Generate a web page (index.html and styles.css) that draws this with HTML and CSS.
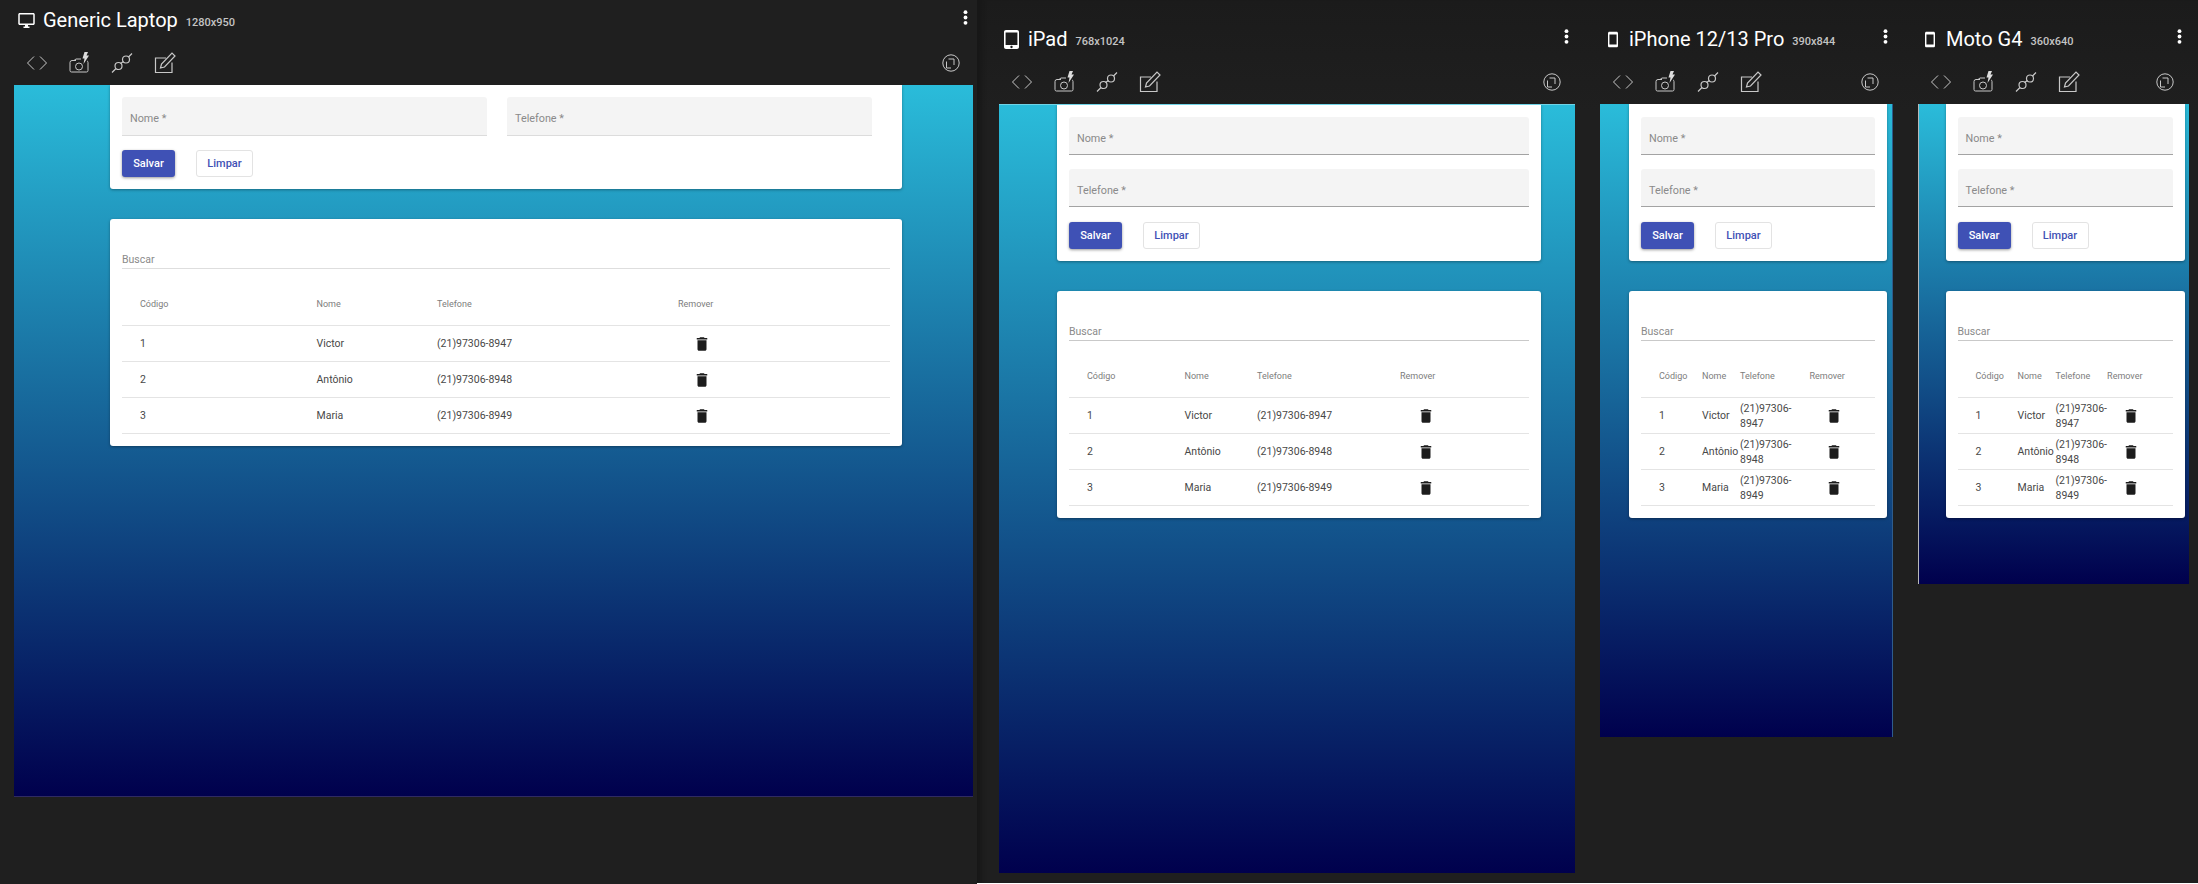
FILE: index.html
```html
<!DOCTYPE html>
<html lang="en">
<head>
    <meta charset="UTF-8">
    <meta name="viewport" content="width=device-width, initial-scale=1.0">
    <title>Responsive preview</title>
    <link rel="stylesheet" href="styles.css">
</head>
<body>
    <svg class="sprites" width="0" height="0">
        <symbol id="i-desktop" viewBox="1 2 22 20"><path fill="currentColor" d="M21 2H3c-1.1 0-2 .9-2 2v12c0 1.1.9 2 2 2h7v2H8v2h8v-2h-2v-2h7c1.100 0 2-.9 2-2V4c0-1.100-.9-2-2-2zm0 14H3V4h18v12z"/></symbol>
        <symbol id="i-tablet" viewBox="2 0 19 24"><path fill="currentColor" d="M18.500 0h-14C3.120 0 2 1.120 2 2.500v19C2 22.880 3.120 24 4.500 24h14c1.380 0 2.500-1.120 2.500-2.500v-19C21 1.120 19.880 0 18.500 0zm-7 23c-.83 0-1.500-.67-1.500-1.500s.67-1.500 1.500-1.500 1.500.67 1.500 1.500-.67 1.500-1.500 1.500zm7.500-4H4V3h15v16z"/></symbol>
        <symbol id="i-phone" viewBox="5 1 14 22"><path fill="currentColor" d="M17 1H7c-1.100 0-2 .9-2 2v18c0 1.100.9 2 2 2h10c1.100 0 2-.9 2-2V3c0-1.100-.9-2-2-2zm0 18H7V5h10v14z"/></symbol>
        <symbol id="i-dots" viewBox="0 0 4 14"><circle cx="2" cy="2" r="1.800" fill="currentColor"/><circle cx="2" cy="7" r="1.800" fill="currentColor"/><circle cx="2" cy="12" r="1.800" fill="currentColor"/></symbol>
        <symbol id="i-code" viewBox="0 0 22 22"><path fill="none" stroke="currentColor" d="M8 4.500L1.500 11 8 17.500M14 4.500l6.500 6.500-6.500 6.500"/></symbol>
        <symbol id="i-camera" viewBox="0 0 22 22"><path fill="none" stroke="currentColor" d="M7 8.500H3a2 2 0 0 0-2 2v8a1.500 1.500 0 0 0 1.500 1.500h15a1.500 1.500 0 0 0 1.500-1.500v-8a2 2 0 0 0-1-1.700M5 8.500l2-1.500h5"/><circle cx="10" cy="14.500" r="3.500" fill="none" stroke="currentColor"/><path fill="#ddd" d="M15.500 0h3.500l-1.500 3.500H20L14.500 12l1-5.500H13.500z"/></symbol>
        <symbol id="i-plug" viewBox="0 0 22 22"><circle cx="7.500" cy="14" r="3.500" fill="none" stroke="currentColor" stroke-width="1.200"/><circle cx="15" cy="7.500" r="3.500" fill="none" stroke="currentColor" stroke-width="1.200"/><path fill="none" stroke="currentColor" stroke-width="1.200" d="M1 20.500l4-4M9.500 11.500l3-2M17.500 5L21 1.500"/></symbol>
        <symbol id="i-edit" viewBox="0 0 22 22"><path fill="none" stroke="currentColor" stroke-width="1.200" d="M12 6H1.500v14.500H18V10.500"/><path fill="none" stroke="currentColor" stroke-width="1.200" d="M6.500 16l1-4L18 1l3 3-10.500 11z"/></symbol>
        <symbol id="i-rotate" viewBox="0 0 18 18"><circle cx="9" cy="9" r="8.200" fill="none" stroke="currentColor"/><path fill="none" stroke="currentColor" d="M6.500 5h5.500v6M4.500 7.500V14H9"/></symbol>
        <symbol id="i-trash" viewBox="0 0 24 24"><path fill="currentColor" d="M6 19c0 1.100.9 2 2 2h8c1.100 0 2-.9 2-2V7H6v12zM19 4h-3.500l-1-1h-5l-1 1H5v2h14V4z"/></symbol>
    </svg>

    <div class="devices">
        <section class="device laptop">
            <header class="device-head">
                <svg class="device-icon"><use href="#i-desktop"/></svg>
                <span class="device-name">Generic Laptop</span>
                <span class="device-size">1280x950</span>
                <svg class="dots"><use href="#i-dots"/></svg>
            </header>
            <div class="toolbar">
                <svg class="tool"><use href="#i-code"/></svg>
                <svg class="tool"><use href="#i-camera"/></svg>
                <svg class="tool"><use href="#i-plug"/></svg>
                <svg class="tool"><use href="#i-edit"/></svg>
                <svg class="rotate"><use href="#i-rotate"/></svg>
            </div>
            <div class="screen">
                <form class="card form-card">
                    <div class="fields">
                        <div class="field">Nome *</div>
                        <div class="field">Telefone *</div>
                    </div>
                    <div class="actions">
                        <button type="button" class="btn btn-save">Salvar</button>
                        <button type="button" class="btn btn-clear">Limpar</button>
                    </div>
                </form>
                <div class="card list-card">
                    <div class="search"><span>Buscar</span></div>
                    <table class="people">
                        <thead><tr><th class="col1">Código</th><th class="col2">Nome</th><th class="col3">Telefone</th><th>Remover</th></tr></thead>
                        <tbody>
                            <tr><td>1</td><td>Victor</td><td>(21)97306-8947</td><td><svg class="trash"><use href="#i-trash"/></svg></td></tr>
                            <tr><td>2</td><td>Antônio</td><td>(21)97306-8948</td><td><svg class="trash"><use href="#i-trash"/></svg></td></tr>
                            <tr><td>3</td><td>Maria</td><td>(21)97306-8949</td><td><svg class="trash"><use href="#i-trash"/></svg></td></tr>
                        </tbody>
                    </table>
                </div>
            </div>
        </section>

        <div class="side">
            <section class="device ipad">
                <header class="device-head">
                    <svg class="device-icon"><use href="#i-tablet"/></svg>
                    <span class="device-name">iPad</span>
                    <span class="device-size">768x1024</span>
                    <svg class="dots"><use href="#i-dots"/></svg>
                </header>
                <div class="toolbar">
                    <svg class="tool"><use href="#i-code"/></svg>
                    <svg class="tool"><use href="#i-camera"/></svg>
                    <svg class="tool"><use href="#i-plug"/></svg>
                    <svg class="tool"><use href="#i-edit"/></svg>
                    <svg class="rotate"><use href="#i-rotate"/></svg>
                </div>
                <div class="screen">
                    <form class="card form-card">
                        <div class="fields">
                            <div class="field">Nome *</div>
                            <div class="field">Telefone *</div>
                        </div>
                        <div class="actions">
                            <button type="button" class="btn btn-save">Salvar</button>
                            <button type="button" class="btn btn-clear">Limpar</button>
                        </div>
                    </form>
                    <div class="card list-card">
                        <div class="search"><span>Buscar</span></div>
                        <table class="people">
                            <thead><tr><th class="col1">Código</th><th class="col2">Nome</th><th class="col3">Telefone</th><th>Remover</th></tr></thead>
                            <tbody>
                                <tr><td>1</td><td>Victor</td><td>(21)97306-8947</td><td><svg class="trash"><use href="#i-trash"/></svg></td></tr>
                                <tr><td>2</td><td>Antônio</td><td>(21)97306-8948</td><td><svg class="trash"><use href="#i-trash"/></svg></td></tr>
                                <tr><td>3</td><td>Maria</td><td>(21)97306-8949</td><td><svg class="trash"><use href="#i-trash"/></svg></td></tr>
                            </tbody>
                        </table>
                    </div>
                </div>
            </section>

            <section class="device iphone">
                <header class="device-head">
                    <svg class="device-icon"><use href="#i-phone"/></svg>
                    <span class="device-name">iPhone 12/13 Pro</span>
                    <span class="device-size">390x844</span>
                    <svg class="dots"><use href="#i-dots"/></svg>
                </header>
                <div class="toolbar">
                    <svg class="tool"><use href="#i-code"/></svg>
                    <svg class="tool"><use href="#i-camera"/></svg>
                    <svg class="tool"><use href="#i-plug"/></svg>
                    <svg class="tool"><use href="#i-edit"/></svg>
                    <svg class="rotate"><use href="#i-rotate"/></svg>
                </div>
                <div class="screen">
                    <form class="card form-card">
                        <div class="fields">
                            <div class="field">Nome *</div>
                            <div class="field">Telefone *</div>
                        </div>
                        <div class="actions">
                            <button type="button" class="btn btn-save">Salvar</button>
                            <button type="button" class="btn btn-clear">Limpar</button>
                        </div>
                    </form>
                    <div class="card list-card">
                        <div class="search"><span>Buscar</span></div>
                        <table class="people">
                            <thead><tr><th class="col1">Código</th><th class="col2">Nome</th><th class="col3">Telefone</th><th>Remover</th></tr></thead>
                            <tbody>
                                <tr><td>1</td><td>Victor</td><td>(21)97306-8947</td><td><svg class="trash"><use href="#i-trash"/></svg></td></tr>
                                <tr><td>2</td><td>Antônio</td><td>(21)97306-8948</td><td><svg class="trash"><use href="#i-trash"/></svg></td></tr>
                                <tr><td>3</td><td>Maria</td><td>(21)97306-8949</td><td><svg class="trash"><use href="#i-trash"/></svg></td></tr>
                            </tbody>
                        </table>
                    </div>
                </div>
            </section>

            <section class="device moto">
                <header class="device-head">
                    <svg class="device-icon"><use href="#i-phone"/></svg>
                    <span class="device-name">Moto G4</span>
                    <span class="device-size">360x640</span>
                    <svg class="dots"><use href="#i-dots"/></svg>
                </header>
                <div class="toolbar">
                    <svg class="tool"><use href="#i-code"/></svg>
                    <svg class="tool"><use href="#i-camera"/></svg>
                    <svg class="tool"><use href="#i-plug"/></svg>
                    <svg class="tool"><use href="#i-edit"/></svg>
                    <svg class="rotate"><use href="#i-rotate"/></svg>
                </div>
                <div class="screen">
                    <form class="card form-card">
                        <div class="fields">
                            <div class="field">Nome *</div>
                            <div class="field">Telefone *</div>
                        </div>
                        <div class="actions">
                            <button type="button" class="btn btn-save">Salvar</button>
                            <button type="button" class="btn btn-clear">Limpar</button>
                        </div>
                    </form>
                    <div class="card list-card">
                        <div class="search"><span>Buscar</span></div>
                        <table class="people">
                            <thead><tr><th class="col1">Código</th><th class="col2">Nome</th><th class="col3">Telefone</th><th>Remover</th></tr></thead>
                            <tbody>
                                <tr><td>1</td><td>Victor</td><td>(21)97306-8947</td><td><svg class="trash"><use href="#i-trash"/></svg></td></tr>
                                <tr><td>2</td><td>Antônio</td><td>(21)97306-8948</td><td><svg class="trash"><use href="#i-trash"/></svg></td></tr>
                                <tr><td>3</td><td>Maria</td><td>(21)97306-8949</td><td><svg class="trash"><use href="#i-trash"/></svg></td></tr>
                            </tbody>
                        </table>
                    </div>
                </div>
            </section>
        </div>
    </div>
</body>
</html>
```

FILE: styles.css
```css
* {
    box-sizing: border-box;
}
html, body {
    margin: 0;
    height: 884px;
    overflow: hidden;
    background-color: #1f1f1f;
    font-family: Roboto, "Liberation Sans", sans-serif;
}
.sprites {
    position: absolute;
}
.devices {
    display: flex;
    height: 884px;
}
.side {
    display: flex;
    flex: 1;
    height: 884px;
    border-bottom: 1px solid #fff;
    background: linear-gradient(#1b1b1b, #1f1f1f 110px);
    box-shadow: inset 9px 0 5px -5px #171717;
}

/* each device sets its own pane size, insets and table columns */
.device {
    flex: none;
    width: var(--pane);
    padding-top: var(--top);
}
.laptop {
    --pane: 977px;
    --top: 0px;
    --head-left: 18px;
    --head-right: 9px;
    --icon-w: 17px;
    --icon-h: 15px;
    --icon-gap: 8px;
    --tool-left: 26px;
    --rotate-right: 17px;
    --screen-left: 14px;
    --screen-w: 959px;
    --screen-h: 712px;
    --card-left: 96px;
    --card-w: 792px;
    --c1: 194.5px;
    --c2: 120.5px;
    --c3: 241px;
    --trash-left: 15px;
    background: #1f1f1f;
}
.ipad {
    --pane: 613px;
    --top: 19px;
    --head-left: 27px;
    --head-right: 21px;
    --icon-w: 15px;
    --icon-h: 19px;
    --icon-gap: 9px;
    --tool-left: 34px;
    --rotate-right: 29px;
    --screen-left: 22px;
    --screen-w: 576px;
    --screen-h: 769px;
    --card-left: 58px;
    --card-w: 484px;
    --c1: 115.5px;
    --c2: 72.5px;
    --c3: 143px;
    --trash-left: 17px;
}
.iphone {
    --pane: 320px;
    --top: 19px;
    --head-left: 18px;
    --head-right: 22px;
    --icon-w: 10px;
    --icon-h: 17px;
    --icon-gap: 11px;
    --tool-left: 22px;
    --rotate-right: 31px;
    --screen-left: 10px;
    --screen-w: 293px;
    --screen-h: 633px;
    --card-left: 29px;
    --card-w: 258px;
    --c1: 61px;
    --c2: 38px;
    --c3: 69.5px;
    --trash-left: 15px;
}
.moto {
    --pane: 288px;
    --top: 19px;
    --head-left: 15px;
    --head-right: 16px;
    --icon-w: 10px;
    --icon-h: 17px;
    --icon-gap: 11px;
    --tool-left: 20px;
    --rotate-right: 24px;
    --screen-left: 8px;
    --screen-w: 271px;
    --screen-h: 480px;
    --card-left: 26.5px;
    --card-w: 239.5px;
    --c1: 60px;
    --c2: 38px;
    --c3: 51.6px;
    --trash-left: 15px;
}

.device-head {
    display: flex;
    align-items: center;
    height: 40px;
    padding: 0 var(--head-right) 0 var(--head-left);
    color: #fff;
}
.device-icon {
    flex: none;
    width: var(--icon-w);
    height: var(--icon-h);
    margin-right: var(--icon-gap);
}
.device-name {
    font-size: 20px;
    white-space: nowrap;
    color: #fff;
}
.device-size {
    margin: 4px 0 0 8px;
    font-size: 11px;
    font-weight: 500;
    color: #c4c4c4;
    white-space: nowrap;
}
.dots {
    flex: none;
    width: 5px;
    height: 15px;
    margin: -6px 0 0 auto;
}

.toolbar {
    display: flex;
    align-items: center;
    gap: 20.6px;
    height: 45px;
    padding: 0 var(--rotate-right) 0 var(--tool-left);
    color: #c8c8c8;
}
.tool {
    flex: none;
    width: 22px;
    height: 22px;
}
.rotate {
    flex: none;
    width: 18px;
    height: 18px;
    margin-left: auto;
}

.screen {
    width: var(--screen-w);
    height: var(--screen-h);
    margin-left: var(--screen-left);
    overflow: hidden;
    background: linear-gradient(#2abcda, #00004d);
}
.laptop .screen {
    border-bottom: 1px solid #2f2a62;
}
.iphone .screen {
    border-right: 1px solid #2e5c8c;
}
.moto .screen {
    border-left: 1px solid #b9b9b9;
}
.ipad .screen {
    border-top: 1px solid #6fd3e6;
}

.card {
    width: var(--card-w);
    margin-left: var(--card-left);
    padding: 12px;
    background-color: #fff;
    border-radius: 3px;
    box-shadow: 0 1px 3px rgba(0, 0, 0, 0.35);
}
.form-card {
    border-radius: 0 0 3px 3px;
}
.ipad .form-card {
    margin-top: -1px;
    padding-top: 13px;
}
.iphone .form-card, .moto .form-card {
    padding-top: 13px;
}
.fields {
    display: flex;
    flex-direction: column;
    gap: 14px;
}
.laptop .fields {
    flex-direction: row;
    gap: 20px;
}
.laptop .field {
    width: 365px;
    height: 39px;
    border-bottom-color: #dcdcdc;
}
.field {
    display: flex;
    align-items: center;
    height: 38px;
    padding: 5px 0 0 8px;
    font-size: 10.8px;
    color: #8a8a8a;
    background-color: #f4f4f4;
    border-bottom: 1px solid #a3a3a3;
    border-radius: 3px 3px 0 0;
}
.actions {
    display: flex;
    gap: 21px;
    margin-top: 15px;
}
.laptop .actions {
    margin-top: 14px;
}
.btn {
    height: 27px;
    padding: 0;
    font-family: inherit;
    font-size: 11px;
    font-weight: 500;
    border-radius: 3px;
}
.btn-save {
    width: 53px;
    color: #fff;
    background-color: #3f51b5;
    border: none;
    box-shadow: 0 1px 3px rgba(0, 0, 0, 0.4);
}
.btn-clear {
    width: 57px;
    color: #3f51b5;
    background-color: #fff;
    border: 1px solid #e3e3e3;
}

.list-card {
    margin-top: 30px;
    padding-bottom: 12px;
}
.search {
    display: flex;
    align-items: flex-end;
    height: 38px;
    padding-bottom: 2px;
    font-size: 10.5px;
    color: #8a8a8a;
    border-bottom: 1px solid #c9c9c9;
}
.laptop .search {
    border-bottom-color: #dedede;
}
.people {
    width: 100%;
    table-layout: fixed;
    border-collapse: separate;
    border-spacing: 0;
}
.people th {
    height: 57px;
    padding: 14px 0 0;
    font-size: 9px;
    font-weight: 400;
    text-align: left;
    color: #7d7d7d;
    border-bottom: 1px solid #e4e4e4;
}
.people td {
    height: 36px;
    padding: 0;
    font-size: 10.5px;
    line-height: 15px;
    color: #484848;
    border-bottom: 1px solid #e4e4e4;
}
.people th:first-child {
    padding-left: 18px;
}
.people td:first-child {
    padding-left: 18px;
}
.col1 {
    width: var(--c1);
}
.col2 {
    width: var(--c2);
}
.col3 {
    width: var(--c3);
}
.trash {
    display: block;
    width: 18px;
    height: 18px;
    margin: 1px 0 0 var(--trash-left);
    color: #1c1c1c;
}
```
